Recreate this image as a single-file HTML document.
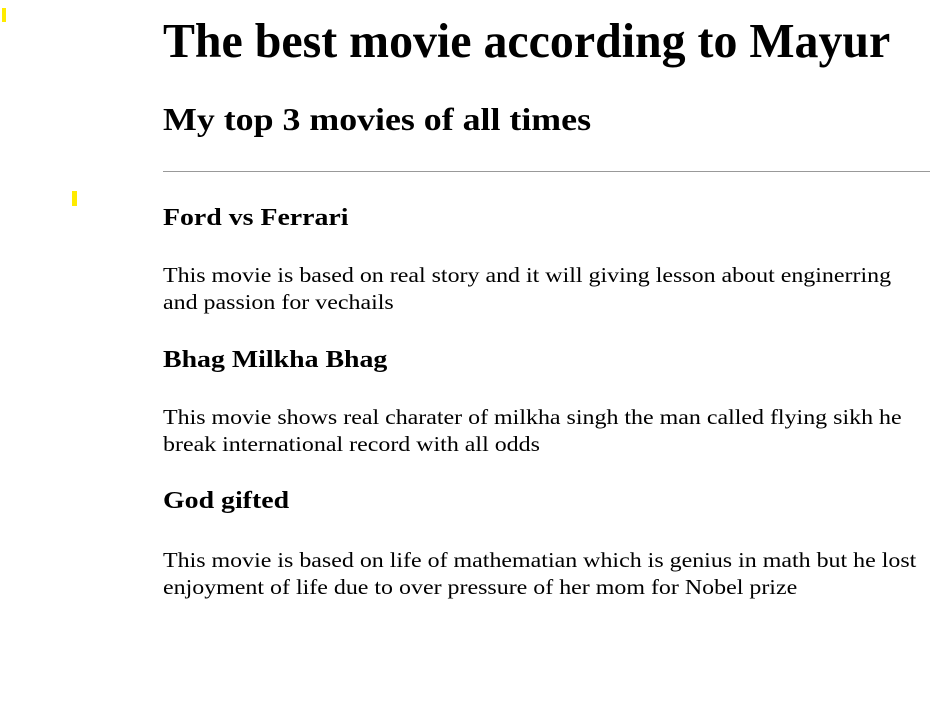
<!DOCTYPE html>
<html><head><style>
body{margin:0;background:#fff;width:932px;height:707px;overflow:hidden;position:relative;font-family:"Liberation Serif",serif;color:#000}
.a{position:absolute;left:163px;margin:0;white-space:nowrap;transform-origin:0 0}
h1{font-size:49px;line-height:56px;transform:scaleX(0.977)}
h2{font-size:32px;line-height:37px;transform:scaleX(1.12)}
h3{font-size:24px;line-height:28px;transform:scaleX(1.16)}
p{font-size:21px;line-height:27px;transform:scaleX(1.14)}
.y{position:absolute;background:#ffeb00}
</style></head><body>
<div class="y" style="left:2px;top:8px;width:4px;height:14px"></div>
<div class="y" style="left:72px;top:191px;width:5px;height:15px"></div>
<h1 class="a" style="top:13px">The best movie according to Mayur</h1>
<h2 class="a" style="top:101px">My top 3 movies of all times</h2>
<div style="position:absolute;left:163px;top:171px;width:767px;height:1px;background:#999"></div>
<h3 class="a" style="top:204px">Ford vs Ferrari</h3>
<p class="a" style="top:262px">This movie is based on real story and it will giving lesson about enginerring<br>and passion for vechails</p>
<h3 class="a" style="top:346px">Bhag Milkha Bhag</h3>
<p class="a" style="top:404px">This movie shows real charater of milkha singh the man called flying sikh he<br>break international record with all odds</p>
<h3 class="a" style="top:487px">God gifted</h3>
<p class="a" style="top:547px">This movie is based on life of mathematian which is genius in math but he lost<br>enjoyment of life due to over pressure of her mom for Nobel prize</p>
</body></html>
